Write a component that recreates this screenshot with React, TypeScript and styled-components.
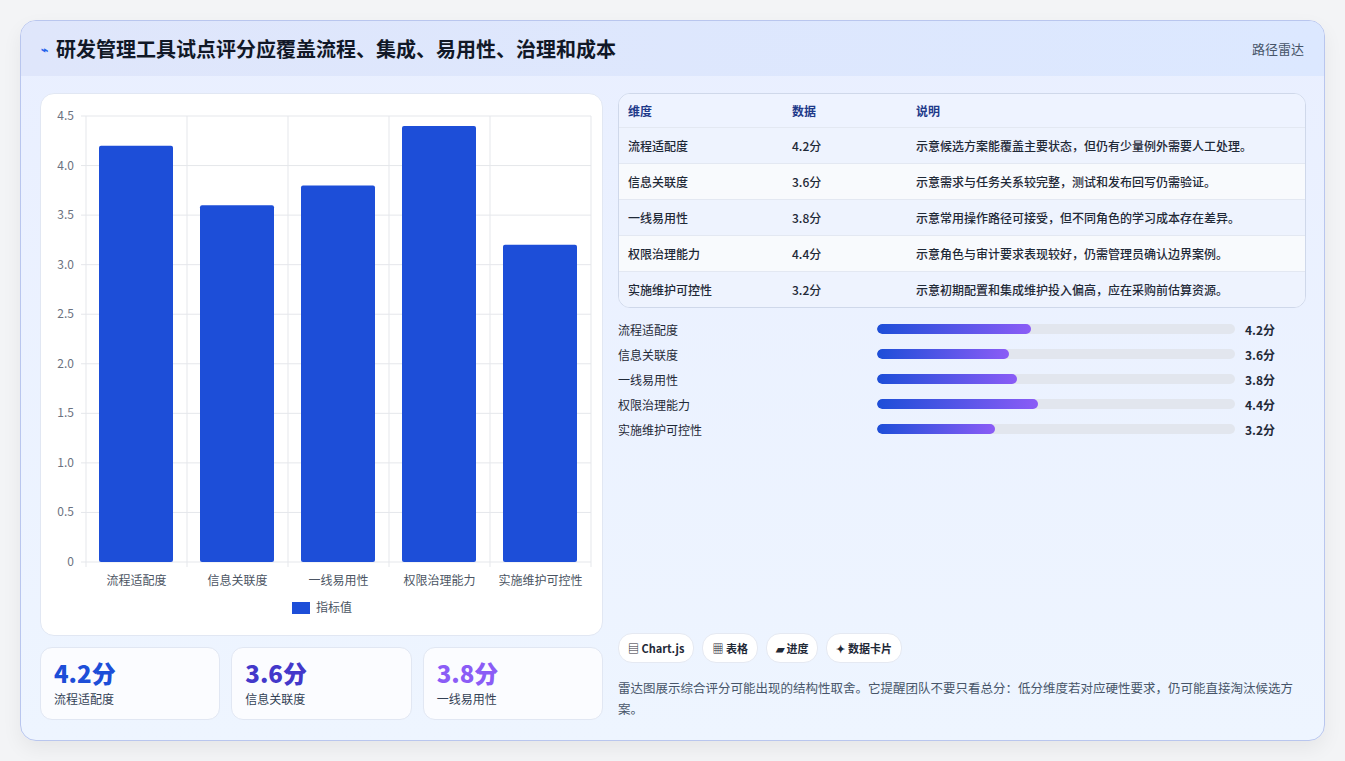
import React from "react";
import styled, { createGlobalStyle } from "styled-components";

const G = createGlobalStyle`
  body{margin:0;background:#f3f4f6;font-family:"Noto Sans CJK SC","Noto Sans",sans-serif;}
`;
const Page = styled.div`padding:20px 20px 20px 20px;height:761px;box-sizing:border-box;`;
const Card = styled.div`width:1305px;height:721px;box-sizing:border-box;border:1px solid #b9c6ee;border-radius:16px;background:linear-gradient(180deg,#e9efff,#eef5ff);overflow:hidden;display:flex;flex-direction:column;box-shadow:0 8px 20px rgba(0,0,0,.06);`;
const Header = styled.div`height:55px;flex:none;display:flex;align-items:center;justify-content:space-between;padding:0 20px;background:linear-gradient(90deg,#dfe6fb,#dce8ff);`;
const Title = styled.h1`margin:0;font-size:20px;font-weight:700;color:#111827;display:flex;align-items:center;gap:8px;`;
const Tag = styled.span`font-size:13px;color:#475569;`;
const Body = styled.div`flex:1;display:grid;grid-template-columns:563px 688px;gap:15px;padding:17px 19px 18px 19px;`;
const Col = styled.div`display:flex;flex-direction:column;gap:11px;min-height:0;`;
const ChartCard = styled.div`height:543px;background:#fff;border:1px solid #e1e7f3;border-radius:14px;box-sizing:border-box;`;
const Stats = styled.div`display:grid;grid-template-columns:repeat(3,1fr);gap:11px;`;
const Stat = styled.div`height:73px;background:#fbfcff;border:1px solid #e1e7f3;border-radius:12px;padding:10px 13px;box-sizing:border-box;`;
const StatVal = styled.div<{c:string}>`font-size:24px;font-weight:800;color:${p=>p.c};line-height:30px;`;
const StatLbl = styled.div`font-size:12px;color:#334155;margin-top:2px;`;
const Table = styled.div`border:1px solid #cfd8ea;border-radius:12px;overflow:hidden;background:#f5f8ff;`;
const Row = styled.div<{h?:boolean;alt?:boolean}>`display:grid;grid-template-columns:164px 124px 1fr;height:${p=>p.h?33:35}px;align-items:center;padding:0 9px;font-size:12px;color:#1f2937;border-top:${p=>p.h?"none":"1px solid #e3e8f2"};background:${p=>p.h?"#eef3ff":p.alt?"#f8fafd":"#eef3fe"};font-weight:${p=>p.h?600:500};${p=>p.h&&"color:#1e3a8a;"}`;
const Bars = styled.div`display:flex;flex-direction:column;gap:7px;margin-top:12px;`;
const BarRow = styled.div`display:grid;grid-template-columns:259px 358px 1fr;align-items:center;height:18px;font-size:12px;color:#1f2937;column-gap:0;`;
const Track = styled.div`height:10px;border-radius:5px;background:#e2e6ee;overflow:hidden;`;
const Fill = styled.div`height:100%;border-radius:5px;background:linear-gradient(90deg,#1d4ed8,#8b5cf6);`;
const BarVal = styled.span`font-weight:700;padding-left:10px;`;
const Spacer = styled.div`flex:1;`;
const Chips = styled.div`display:flex;gap:8px;`;
const Chip = styled.span`height:28px;padding:0 9px;border-radius:14px;background:#fff;border:1px solid #e5e9f2;font-size:11px;font-weight:600;color:#1f2937;display:flex;align-items:center;gap:4px;`;
const Note = styled.p`margin:14px 0 3px;font-size:12.5px;line-height:21px;color:#475569;`;

const cats=["流程适配度","信息关联度","一线易用性","权限治理能力","实施维护可控性"];
const vals=[4.2,3.6,3.8,4.4,3.2];
const descs=["示意候选方案能覆盖主要状态，但仍有少量例外需要人工处理。","示意需求与任务关系较完整，测试和发布回写仍需验证。","示意常用操作路径可接受，但不同角色的学习成本存在差异。","示意角色与审计要求表现较好，仍需管理员确认边界案例。","示意初期配置和集成维护投入偏高，应在采购前估算资源。"];

function Chart(){
  const x0=45,x1=550,y0=468,yt=22,w=(x1-x0)/5;
  const y=(v:number)=>y0-(v/4.5)*(y0-yt);
  const ticks=[0,0.5,1,1.5,2,2.5,3,3.5,4,4.5];
  return <svg width="561" height="541" style={{display:"block"}} fontFamily="'Noto Sans CJK SC','Noto Sans',sans-serif">
    {ticks.map(t=><g key={t}><line x1={x0-5} x2={x1} y1={y(t)} y2={y(t)} stroke="#e5e7eb"/><text x={x0-12} y={y(t)+4} fontSize="12" fill="#6b7280" textAnchor="end">{t===0?"0":t.toFixed(1)}</text></g>)}
    {[0,1,2,3,4,5].map(i=><line key={i} x1={x0+i*w} x2={x0+i*w} y1={yt} y2={y0+5} stroke="#e5e7eb"/>)}
    {vals.map((v,i)=><rect key={i} x={x0+i*w+13} width={w-27} y={y(v)} height={y0-y(v)} fill="#1d4ed8" rx="2"/>)}
    {cats.map((c,i)=><text key={c} x={x0+(i+.5)*w} y={y0+23} fontSize="12" fill="#4b5563" textAnchor="middle">{c}</text>)}
    <rect x="251" y="508" width="18" height="12" fill="#1d4ed8"/>
    <text x="275" y="518" fontSize="12" fill="#4b5563">指标值</text>
  </svg>;
}

export default function App(){
  return <><G/><Page><Card>
    <Header><Title><span style={{fontSize:12,color:"#2563eb"}}>⌁</span>研发管理工具试点评分应覆盖流程、集成、易用性、治理和成本</Title><Tag>路径雷达</Tag></Header>
    <Body>
      <Col>
        <ChartCard><Chart/></ChartCard>
        <Stats>
          <Stat><StatVal c="#1d4ed8">4.2分</StatVal><StatLbl>流程适配度</StatLbl></Stat>
          <Stat><StatVal c="#4338ca">3.6分</StatVal><StatLbl>信息关联度</StatLbl></Stat>
          <Stat><StatVal c="#8b5cf6">3.8分</StatVal><StatLbl>一线易用性</StatLbl></Stat>
        </Stats>
      </Col>
      <Col style={{gap:0}}>
        <Table>
          <Row h><span>维度</span><span>数据</span><span>说明</span></Row>
          {cats.map((c,i)=><Row key={c} alt={i%2===1}><span>{c}</span><span>{vals[i]}分</span><span>{descs[i]}</span></Row>)}
        </Table>
        <Bars>
          {cats.map((c,i)=><BarRow key={c}><span>{c}</span><Track><Fill style={{width:`${vals[i]*10+1}%`}}/></Track><BarVal>{vals[i]}分</BarVal></BarRow>)}
        </Bars>
        <Spacer/>
        <Chips><Chip>▤ Chart.js</Chip><Chip>▦ 表格</Chip><Chip>▰ 进度</Chip><Chip>✦ 数据卡片</Chip></Chips>
        <Note>雷达图展示综合评分可能出现的结构性取舍。它提醒团队不要只看总分：低分维度若对应硬性要求，仍可能直接淘汰候选方案。</Note>
      </Col>
    </Body>
  </Card></Page></>;
}
